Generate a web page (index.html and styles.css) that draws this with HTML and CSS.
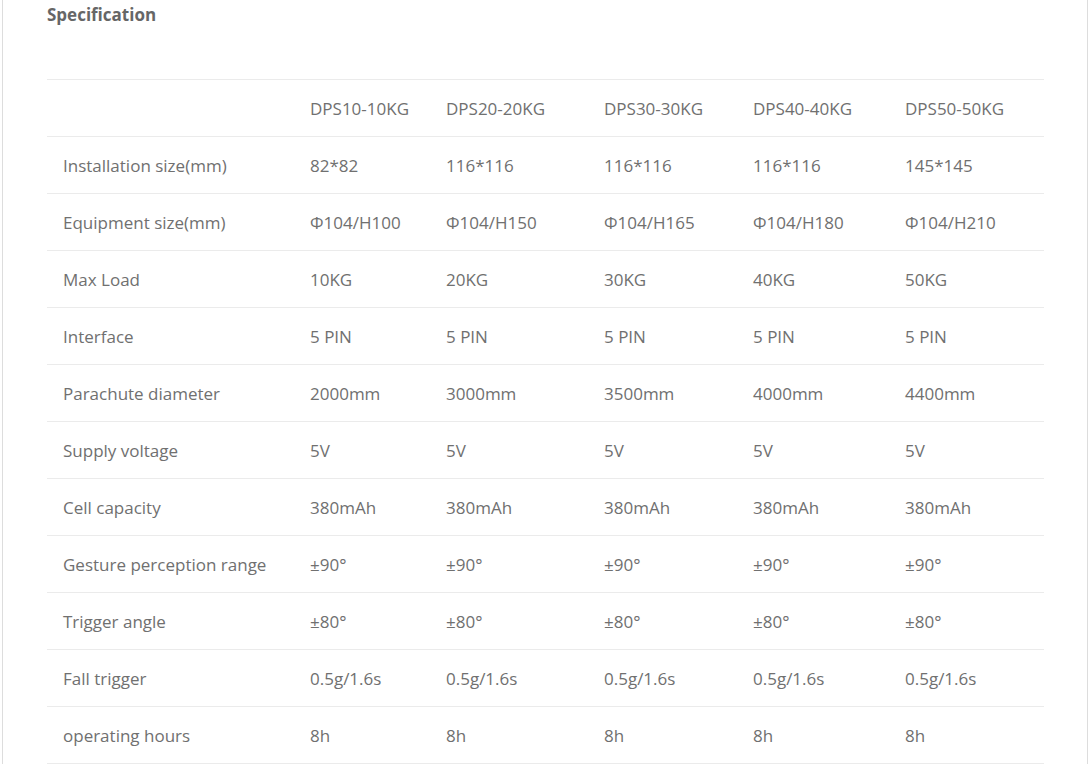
FILE: index.html
```html
<!DOCTYPE html>
<html>
<head>
<meta charset="utf-8">
<link rel="stylesheet" href="styles.css">
</head>
<body>
<div class="panel">
  <h2 class="title">Specification</h2>
  <table class="spec">
    <colgroup>
      <col class="c1"><col class="c2"><col class="c3"><col class="c4"><col class="c5"><col class="c6">
    </colgroup>
    <tr><td></td><td>DPS10-10KG</td><td>DPS20-20KG</td><td>DPS30-30KG</td><td>DPS40-40KG</td><td>DPS50-50KG</td></tr>
    <tr><td>Installation size(mm)</td><td>82*82</td><td>116*116</td><td>116*116</td><td>116*116</td><td>145*145</td></tr>
    <tr><td>Equipment size(mm)</td><td>Φ104/H100</td><td>Φ104/H150</td><td>Φ104/H165</td><td>Φ104/H180</td><td>Φ104/H210</td></tr>
    <tr><td>Max Load</td><td>10KG</td><td>20KG</td><td>30KG</td><td>40KG</td><td>50KG</td></tr>
    <tr><td>Interface</td><td>5 PIN</td><td>5 PIN</td><td>5 PIN</td><td>5 PIN</td><td>5 PIN</td></tr>
    <tr><td>Parachute diameter</td><td>2000mm</td><td>3000mm</td><td>3500mm</td><td>4000mm</td><td>4400mm</td></tr>
    <tr><td>Supply voltage</td><td>5V</td><td>5V</td><td>5V</td><td>5V</td><td>5V</td></tr>
    <tr><td>Cell capacity</td><td>380mAh</td><td>380mAh</td><td>380mAh</td><td>380mAh</td><td>380mAh</td></tr>
    <tr><td>Gesture perception range</td><td>±90°</td><td>±90°</td><td>±90°</td><td>±90°</td><td>±90°</td></tr>
    <tr><td>Trigger angle</td><td>±80°</td><td>±80°</td><td>±80°</td><td>±80°</td><td>±80°</td></tr>
    <tr><td>Fall trigger</td><td>0.5g/1.6s</td><td>0.5g/1.6s</td><td>0.5g/1.6s</td><td>0.5g/1.6s</td><td>0.5g/1.6s</td></tr>
    <tr><td>operating hours</td><td>8h</td><td>8h</td><td>8h</td><td>8h</td><td>8h</td></tr>
  </table>
</div>
</body>
</html>
```
FILE: styles.css
```css
html, body {
  margin: 0;
  padding: 0;
  background: #fff;
}
body {
  font-family: "Open Sans", "Liberation Sans", sans-serif;
  color: #666;
}
.panel {
  margin-left: 2px;
  width: 1086px;
  border-left: 1px solid #ddd;
  border-right: 1px solid #ddd;
  padding: 3px 42px 0 44px;
  box-sizing: border-box;
}
.title {
  margin: 0;
  font-size: 17px;
  line-height: 24px;
  font-weight: 700;
  color: #666;
}
.spec {
  margin-top: 52px;
  width: 997px;
  border-collapse: collapse;
  table-layout: fixed;
  font-size: 17px;
  color: #707070;
}
.spec tr {
  border-top: 1px solid #ebebeb;
  border-bottom: 1px solid #ebebeb;
}
.spec td {
  height: 57px;
  padding: 0 16px;
  box-sizing: border-box;
  vertical-align: middle;
  white-space: nowrap;
}
.c1 { width: 247px; }
.c2 { width: 136px; }
.c3 { width: 158px; }
.c4 { width: 149px; }
.c5 { width: 152px; }
.c6 { width: 155px; }
```
